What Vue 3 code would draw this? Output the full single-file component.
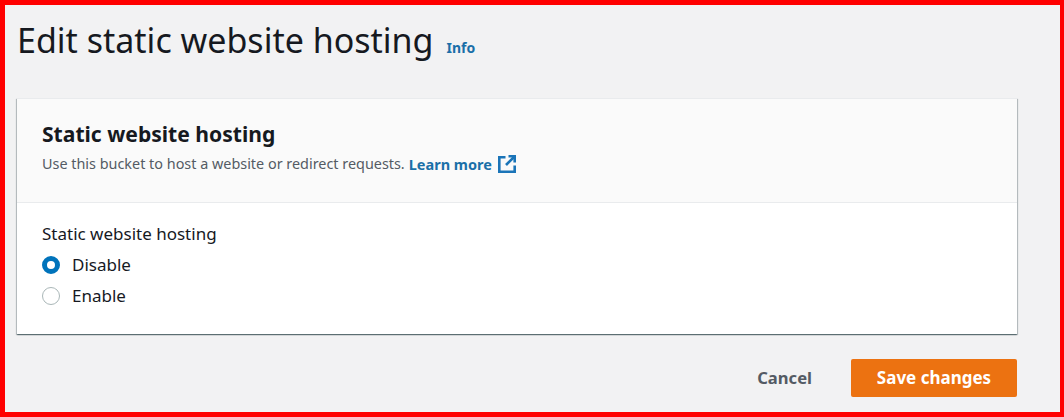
<template>
  <div class="page">
    <header class="title-row">
      <h1>Edit static website hosting</h1>
      <a class="info">Info</a>
    </header>
    <section class="card">
      <div class="card-head">
        <h2>Static website hosting</h2>
        <p class="desc">
          <span>Use this bucket to host a website or redirect requests.</span>
          <a class="learn">Learn more</a>
          <svg class="ext" viewBox="0 0 18 18" width="18" height="18" fill="none" stroke="#1a74b8" stroke-width="2.6">
            <path d="M7.5 2.2H1.3v14.5h15.4v-6.2" />
            <path d="M10.5 1.3h6.2v6.2" />
            <path d="M16.5 1.5 8 10" />
          </svg>
        </p>
      </div>
      <div class="card-body">
        <div class="label">Static website hosting</div>
        <label class="radio" v-for="o in options" :key="o">
          <span class="dot" :class="{ on: o === selected }"></span>
          <span class="opt">{{ o }}</span>
        </label>
      </div>
    </section>
    <footer class="actions">
      <button class="cancel">Cancel</button>
      <button class="save">Save changes</button>
    </footer>
  </div>
</template>

<script setup>
const options = ['Disable', 'Enable']
const selected = 'Disable'
</script>

<style>
html, body { margin: 0; padding: 0; }
</style>

<style scoped>
.page {
  box-sizing: border-box;
  width: 1064px;
  height: 417px;
  border: solid #ff0000;
  border-width: 5px 4px 5px 5px;
  background: #f2f2f3;
  padding: 0 43px 0 12px;
  font-family: "Noto Sans", "Open Sans", sans-serif;
  color: #16191f;
  overflow: hidden;
}
.title-row { display: flex; align-items: flex-end; gap: 13px; height: 71px; box-sizing: border-box; }
h1 { margin: 0 0 11px; font-size: 34px; font-weight: 400; line-height: 50px; }
.info { font-size: 14px; font-weight: 700; color: #1a6fa8; line-height: 20px; margin-bottom: 18px; }
.card {
  margin-top: 22px;
  background: #fff;
  box-shadow: 0 1px 1px 0 rgba(0, 28, 36, 0.4), 1px 1px 1px 0 rgba(0, 28, 36, 0.2), -1px 1px 1px 0 rgba(0, 28, 36, 0.2);
  height: 236px;
}
.card-head {
  box-sizing: border-box;
  height: 105px;
  padding: 21px 25px 0;
  background: #fafafa;
  border-bottom: 1px solid #e9ebed;
  border-top: 1px solid #e9ebed;
}
h2 { margin: 0; font-size: 21.1px; font-weight: 700; line-height: 28px; }
.desc { margin: 5px 0 0; font-size: 14.4px; line-height: 22px; color: #545b64; display: flex; align-items: center; white-space: nowrap; }
.learn { margin-left: 4px; font-size: 14.5px; font-weight: 700; color: #1a6fa8; }
.ext { margin-left: 6px; }
.card-body { padding: 20px 25px 0; font-size: 17px; }
.label { line-height: 22px; margin-bottom: 9px; }
.radio { display: flex; align-items: center; gap: 12px; height: 22px; margin-bottom: 9px; }
.opt { padding-bottom: 2px; }
.dot {
  box-sizing: border-box;
  width: 18px;
  height: 18px;
  border-radius: 50%;
  border: 1.5px solid #aab7b8;
  background: #fff;
}
.dot.on { border: 5px solid #0073bb; }
.actions { display: flex; justify-content: flex-end; align-items: center; margin-top: 25px; gap: 39px; }
button { font-family: inherit; font-size: 17px; font-weight: 700; border: 0; padding: 0 0 2px; cursor: pointer; }
.cancel { background: none; color: #545b64; font-size: 16.6px; margin-left: -1px; }
.save { width: 166px; height: 38px; background: #ec7211; color: #fff; border-radius: 2px; }
</style>
